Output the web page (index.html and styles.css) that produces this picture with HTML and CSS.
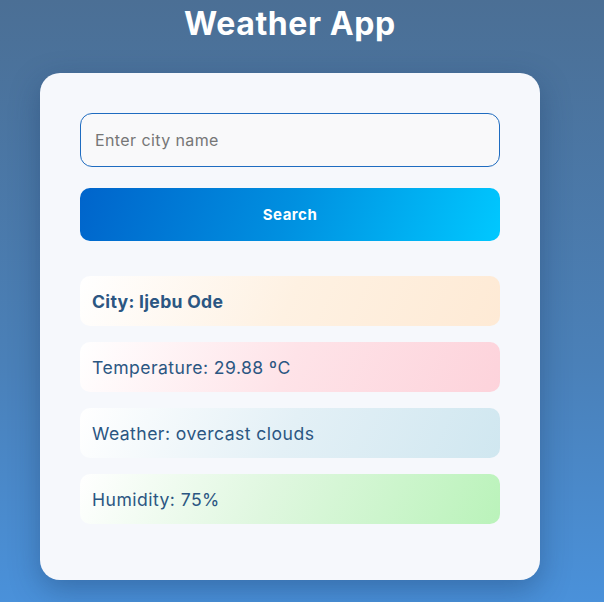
FILE: index.html
```html
<!DOCTYPE html>
<html lang="en">
<head>
<meta charset="utf-8">
<title>Weather App</title>
<link rel="stylesheet" href="styles.css">
</head>
<body>
<div class="page">
  <h1 class="title">Weather App</h1>
  <div class="card">
    <input class="city-input" type="text" placeholder="Enter city name">
    <button class="search-btn">Search</button>
    <div class="results">
      <div class="item item-city"><strong>City: Ijebu Ode</strong></div>
      <div class="item item-temp">Temperature: 29.88 ºC</div>
      <div class="item item-weather">Weather: overcast clouds</div>
      <div class="item item-humidity">Humidity: 75%</div>
    </div>
  </div>
</div>
</body>
</html>
```
FILE: styles.css
```css
html, body {
  margin: 0;
  padding: 0;
  height: 100%;
}
body {
  background: linear-gradient(to bottom, #4b6f95 0%, #4a80b8 60%, #4a91da 100%);
  font-family: "Inter", "Open Sans", sans-serif;
  overflow: hidden;
}
.page {
  width: 580px;
  display: flex;
  flex-direction: column;
  align-items: center;
}
.title {
  margin: 4px 0 0;
  height: 69px;
  font-size: 32px;
  font-weight: 700;
  letter-spacing: 0.6px;
  color: #ffffff;
  line-height: 40px;
}
.card {
  box-sizing: border-box;
  width: 500px;
  padding: 40px 40px 40px;
  background: #f6f8fc;
  border-radius: 20px;
  box-shadow: 0 10px 30px rgba(20, 50, 90, 0.35);
  display: flex;
  flex-direction: column;
}
.city-input {
  box-sizing: border-box;
  width: 420px;
  height: 54px;
  padding: 0 14px;
  border: 1px solid #1f6cc0;
  border-radius: 12px;
  background: #f9f9fa;
  font-family: inherit;
  font-size: 16px;
  letter-spacing: 0.4px;
  color: #333;
  outline: none;
}
.city-input::placeholder {
  color: #767676;
}
.search-btn {
  margin-top: 21px;
  height: 53px;
  border: none;
  border-radius: 10px;
  background: linear-gradient(110deg, #0064cb 0%, #0090e0 50%, #00c8ff 100%);
  color: #ffffff;
  font-family: inherit;
  font-size: 15px;
  font-weight: 700;
  letter-spacing: 0.5px;
}
.results {
  margin-top: 35px;
  display: flex;
  flex-direction: column;
  gap: 16px;
  margin-bottom: 16px;
}
.item {
  box-sizing: border-box;
  height: 50px;
  padding: 0 12px;
  border-radius: 10px;
  display: flex;
  align-items: center;
  font-size: 17.6px;
  letter-spacing: 0.45px;
  color: #2b5682;
}
.item strong {
  font-weight: 700;
  letter-spacing: 0.3px;
}
.item-city {
  background: linear-gradient(115deg, #ffffff 0%, #fef1e2 50%, #feead5 100%);
}
.item-temp {
  background: linear-gradient(115deg, #ffffff 0%, #fee3e8 50%, #fdd3db 100%);
}
.item-weather {
  background: linear-gradient(115deg, #ffffff 0%, #e3f0f6 50%, #d0e7f0 100%);
}
.item-humidity {
  background: linear-gradient(115deg, #ffffff 0%, #dff7df 45%, #baf3ba 100%);
}
```
